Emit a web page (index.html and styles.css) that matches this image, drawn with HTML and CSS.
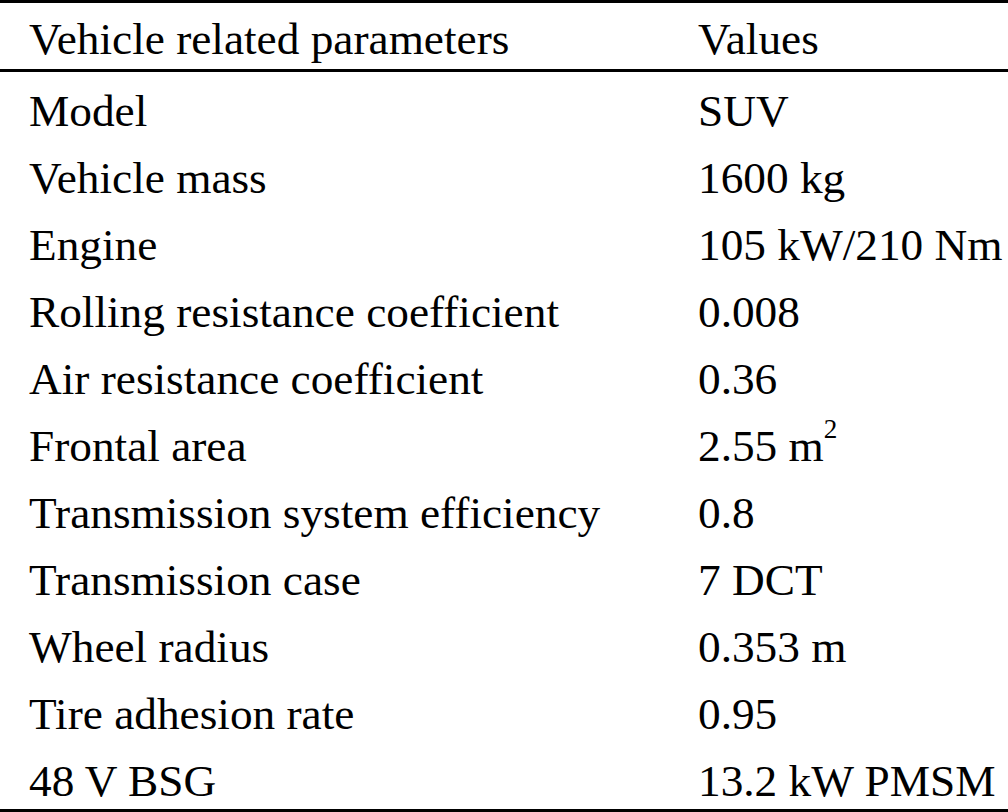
FILE: index.html
```html
<!DOCTYPE html>
<html lang="en">
<head>
<meta charset="utf-8">
<title>Vehicle related parameters</title>
<link rel="stylesheet" href="styles.css">
</head>
<body>
<table class="params">
  <thead>
    <tr><th class="name">Vehicle related parameters</th><th class="val">Values</th></tr>
  </thead>
  <tbody>
    <tr><td class="name">Model</td><td class="val">SUV</td></tr>
    <tr><td class="name">Vehicle mass</td><td class="val">1600 kg</td></tr>
    <tr><td class="name">Engine</td><td class="val">105 kW/210 Nm</td></tr>
    <tr><td class="name">Rolling resistance coefficient</td><td class="val">0.008</td></tr>
    <tr><td class="name">Air resistance coefficient</td><td class="val">0.36</td></tr>
    <tr><td class="name">Frontal area</td><td class="val">2.55 m<sup class="sup">2</sup></td></tr>
    <tr><td class="name">Transmission system efficiency</td><td class="val">0.8</td></tr>
    <tr><td class="name">Transmission case</td><td class="val">7 DCT</td></tr>
    <tr><td class="name">Wheel radius</td><td class="val">0.353 m</td></tr>
    <tr><td class="name">Tire adhesion rate</td><td class="val">0.95</td></tr>
    <tr><td class="name">48 V BSG</td><td class="val">13.2 kW PMSM</td></tr>
  </tbody>
</table>
</body>
</html>
```
FILE: styles.css
```css
html, body {
  margin: 0;
  padding: 0;
  background: #fff;
}
body {
  font-family: "Liberation Serif", "Times New Roman", serif;
  color: #000;
  font-size: 45.3px;
}
.params {
  width: 1008px;
  border-collapse: collapse;
  border-top: 3px solid #000;
  border-bottom: 3px solid #000;
}
.params th,
.params td {
  font-weight: normal;
  text-align: left;
  white-space: nowrap;
  line-height: 56px;
  padding: 11px 0 0 0;
  vertical-align: top;
}
.params thead th {
  padding: 8px 0 2px 0;
  border-bottom: 3px solid #000;
}
.params .name {
  padding-left: 29px;
  width: 669px;
}
.params .val {
  padding-left: 0;
}
.sup {
  font-size: 0.6em;
  line-height: 0;
  vertical-align: 0.85em;
}
```
